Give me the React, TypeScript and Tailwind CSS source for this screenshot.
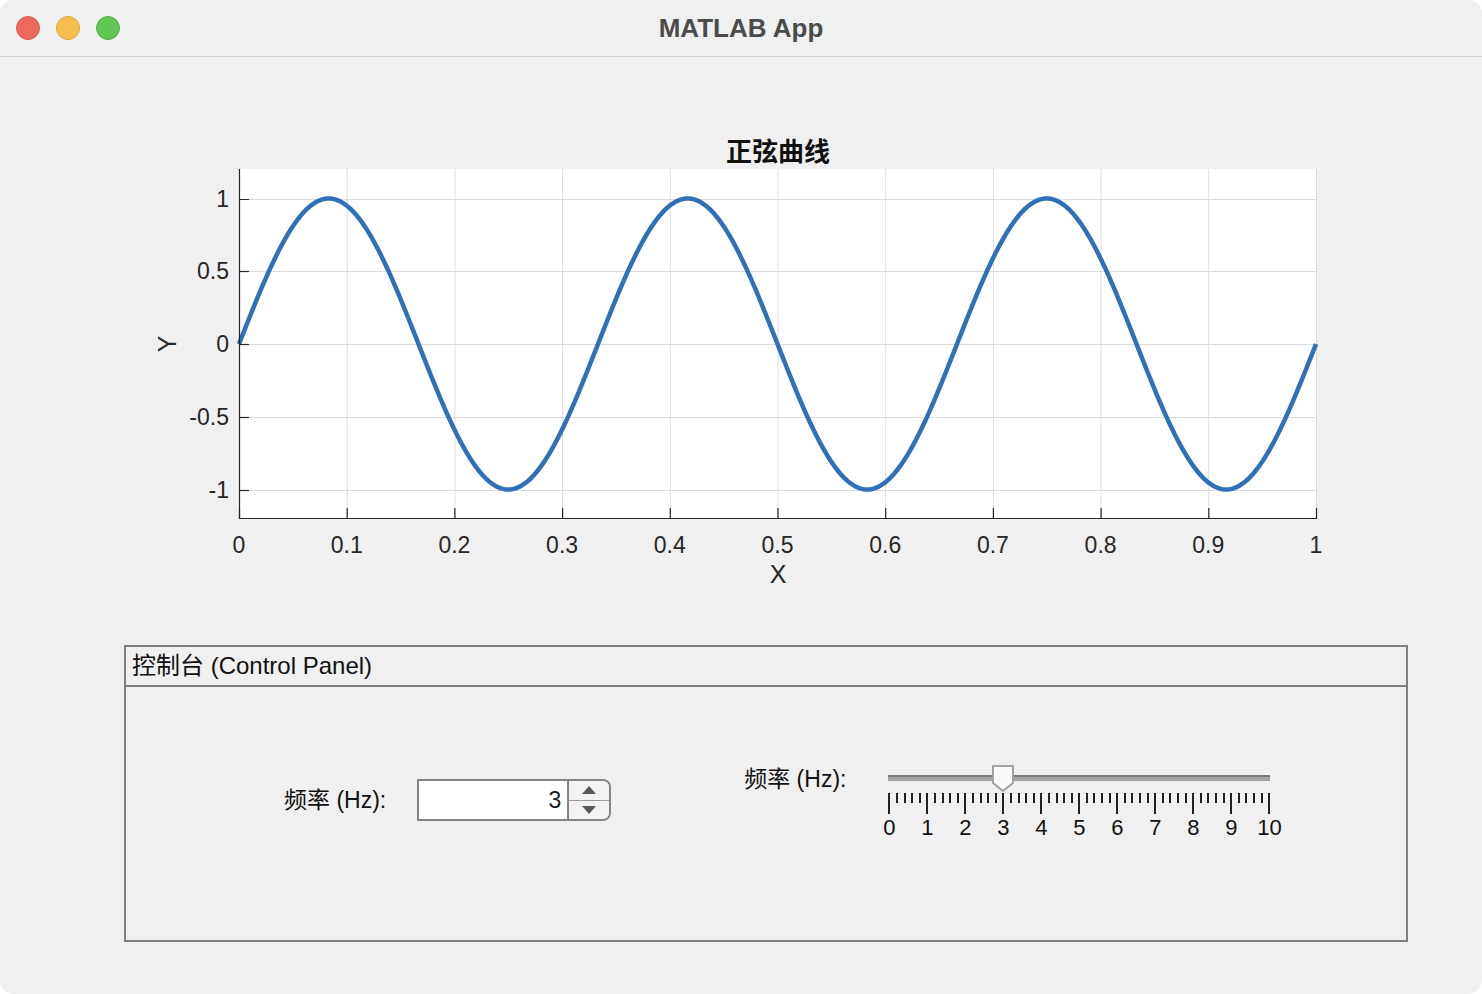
import { FC } from "react";

const FONT = "font-['Liberation_Sans','Noto_Sans_CJK_SC',sans-serif]";

// axes geometry, in svg units (svg sits 125px below the top of the page)
const X0 = 239;
const X1 = 1316;
const Y0 = 44;
const Y1 = 393;
const YMID = 219;
const YUNIT = 145.5;

const xp = (t: number) => X0 + t * (X1 - X0);
const yp = (v: number) => YMID - v * YUNIT;

const freq = 3;

const sinePath = () => {
  const pts: string[] = [];
  for (let i = 0; i <= 600; i++) {
    const t = i / 600;
    const v = Math.sin(2 * Math.PI * freq * t);
    pts.push(`${i === 0 ? "M" : "L"}${xp(t).toFixed(2)},${yp(v).toFixed(2)}`);
  }
  return pts.join(" ");
};

const xTicks = [0, 0.1, 0.2, 0.3, 0.4, 0.5, 0.6, 0.7, 0.8, 0.9, 1];
const yTicks = [1, 0.5, 0, -0.5, -1];

const SineChart: FC = () => (
  <svg width={1482} height={475} className="block" style={{ fontFamily: "'Liberation Sans','Noto Sans CJK SC',sans-serif" }}>
    <rect x={X0} y={Y0} width={X1 - X0} height={Y1 - Y0} fill="#ffffff" />
    {/* grid */}
    {xTicks.map((t) => (
      <line key={`gx${t}`} x1={xp(t) + 0.5} x2={xp(t) + 0.5} y1={Y0} y2={Y1} stroke="#dcdcdc" strokeWidth={1} />
    ))}
    {yTicks.map((v) => (
      <line key={`gy${v}`} x1={X0} x2={X1} y1={Math.round(yp(v)) + 0.5} y2={Math.round(yp(v)) + 0.5} stroke="#dcdcdc" strokeWidth={1} />
    ))}
    {/* curve */}
    <path d={sinePath()} fill="none" stroke="#2e71b8" strokeWidth={4.5} strokeLinejoin="round" />
    {/* axes */}
    <line x1={X0 + 0.5} x2={X0 + 0.5} y1={Y0} y2={Y1 + 1} stroke="#262626" strokeWidth={1.2} />
    <line x1={X0} x2={X1 + 1} y1={Y1 + 0.5} y2={Y1 + 0.5} stroke="#262626" strokeWidth={1.2} />
    {yTicks.map((v) => (
      <line key={`ty${v}`} x1={X0} x2={X0 + 10} y1={Math.round(yp(v)) + 0.5} y2={Math.round(yp(v)) + 0.5} stroke="#262626" strokeWidth={1.2} />
    ))}
    {xTicks.map((t) => (
      <line key={`tx${t}`} x1={xp(t) + 0.5} x2={xp(t) + 0.5} y1={Y1} y2={Y1 - 10} stroke="#262626" strokeWidth={1.2} />
    ))}
    {/* labels */}
    {yTicks.map((v) => (
      <text key={`ly${v}`} x={229} y={yp(v)} textAnchor="end" dominantBaseline="central" fontSize={23} fill="#262626">
        {v}
      </text>
    ))}
    {xTicks.map((t) => (
      <text key={`lx${t}`} x={xp(t)} y={420} textAnchor="middle" dominantBaseline="central" fontSize={23} fill="#262626">
        {t}
      </text>
    ))}
    <text x={778} y={449} textAnchor="middle" dominantBaseline="central" fontSize={25} fill="#262626">
      X
    </text>
    <text x={167} y={YMID} textAnchor="middle" dominantBaseline="central" fontSize={25} fill="#262626" transform={`rotate(-90 167 ${YMID})`}>
      Y
    </text>
    <text x={778} y={27} textAnchor="middle" dominantBaseline="central" fontSize={26} fontWeight={700} fill="#111111">
      正弦曲线
    </text>
  </svg>
);

const Spinner: FC<{ value: number }> = ({ value }) => (
  <div className="flex h-[42px] w-[194px] overflow-hidden rounded-r-[8px] border-2 border-[#858585]">
    <div className="flex flex-1 items-center justify-end border-r-2 border-[#858585] bg-white pr-[6px] text-[23px] text-[#1a1a1a]">
      {value}
    </div>
    <div className="flex w-[40px] flex-col bg-[#f2f2f2]">
      <div className="flex flex-1 items-center justify-center border-b border-[#9a9a9a]">
        <svg width="16" height="8" viewBox="0 0 16 8">
          <polygon points="1,8 15,8 8,0" fill="#585858" />
        </svg>
      </div>
      <div className="flex flex-1 items-center justify-center">
        <svg width="16" height="8" viewBox="0 0 16 8">
          <polygon points="1,0 15,0 8,8" fill="#585858" />
        </svg>
      </div>
    </div>
  </div>
);

const ticks = Array.from({ length: 51 }, (_, i) => i);
const labels = Array.from({ length: 11 }, (_, i) => i);

const Slider: FC<{ value: number }> = ({ value }) => (
  <div className="mt-[9px] flex w-[382px] flex-col">
    <div className="relative h-[6px] border-t-2 border-[#7a7a7a] bg-[#a3a3a3]">
      <svg
        width="22"
        height="27"
        viewBox="0 0 22 27"
        className="absolute top-[-12px]"
        style={{ left: (value / 10) * 382 - 11 }}
      >
        <polygon points="1,1 21,1 21,18 11,26 1,18" fill="#fafafa" stroke="#a2a2a2" strokeWidth={2} strokeLinejoin="round" />
      </svg>
    </div>
    <div className="mt-[12px] flex h-[21px] items-start justify-between">
      {ticks.map((i) => (
        <div key={i} className={i % 5 === 0 ? "h-[21px] w-[2px] bg-[#222]" : "h-[10px] w-[2px] bg-[#222]"} />
      ))}
    </div>
    <div className="mt-[1px] flex justify-between">
      {labels.map((n) => (
        <div key={n} className="flex w-[2px] justify-center overflow-visible text-[22px] leading-[26px] text-[#111]">
          {n}
        </div>
      ))}
    </div>
  </div>
);

export default function App() {
  return (
    <div className={`h-[994px] w-[1482px] bg-white ${FONT}`}>
      <div className="flex h-full flex-col overflow-hidden rounded-[14px] bg-[#f0f0f0]">
        {/* title bar */}
        <div className="relative flex h-[57px] items-center justify-center border-b border-[#d3d3d3] bg-[#eff1f0]">
          <div className="absolute left-[16px] top-[16px] flex gap-[16px]">
            <span className="h-[24px] w-[24px] rounded-full border border-[#de5a4f] bg-[#ed6a5e]" />
            <span className="h-[24px] w-[24px] rounded-full border border-[#dea63b] bg-[#f5bf4f]" />
            <span className="h-[24px] w-[24px] rounded-full border border-[#50ad45] bg-[#61c554]" />
          </div>
          <span className="text-[26px] font-bold text-[#4b4b4b]">MATLAB App</span>
        </div>

        {/* plot */}
        <div className="mt-[68px]">
          <SineChart />
        </div>

        {/* control panel */}
        <div className="ml-[124px] mt-[45px] flex h-[297px] w-[1284px] flex-col border-2 border-[#7f7f7f]">
          <div className="flex h-[40px] items-center border-b-2 border-[#7f7f7f] pl-[6px] text-[24px] text-[#111]">
            控制台 (Control Panel)
          </div>
          <div className="flex items-start">
            <div className="ml-[158px] mt-[92px] flex items-center gap-[31px]">
              <span className="text-[23px] text-[#111]">频率 (Hz):</span>
              <Spinner value={freq} />
            </div>
            <div className="ml-[133px] mt-[79px] flex items-start gap-[42px]">
              <span className="text-[23px] leading-[27px] text-[#111]">频率 (Hz):</span>
              <Slider value={freq} />
            </div>
          </div>
        </div>
      </div>
    </div>
  );
}
